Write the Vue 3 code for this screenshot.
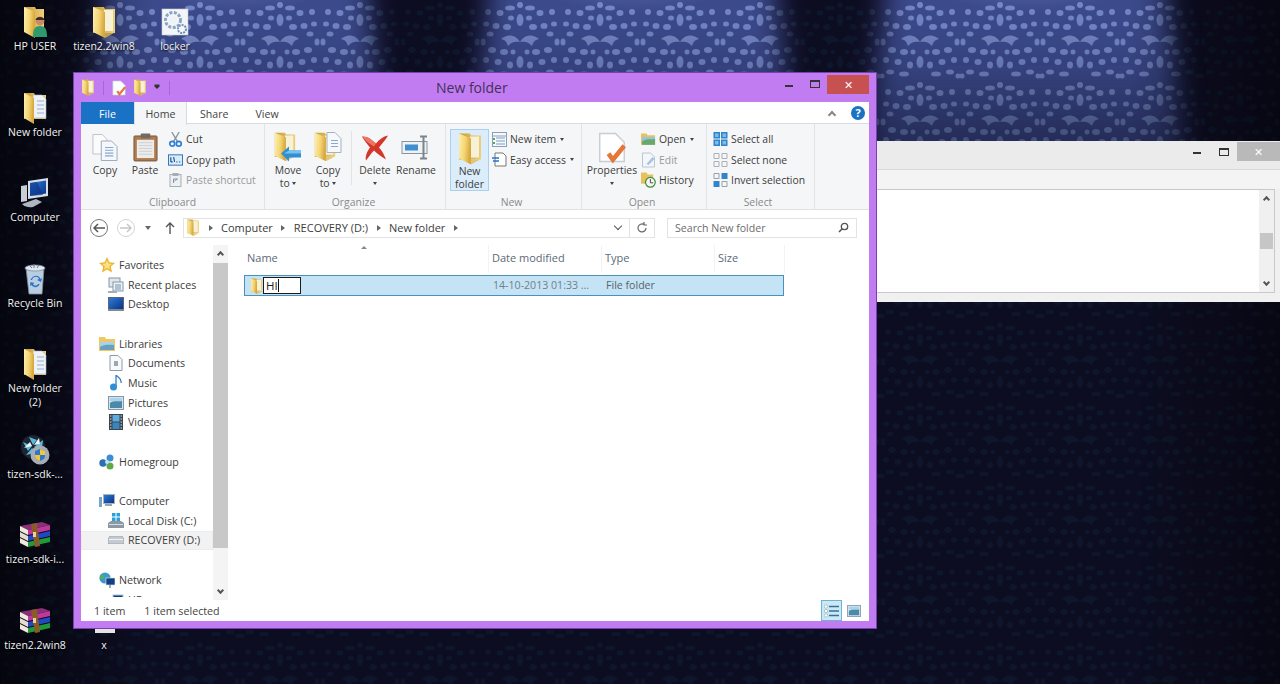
<template>
  <div class="desktop">
    <!-- wallpaper -->
    <svg class="wallpaper" width="1280" height="684" viewBox="0 0 1280 684">
      <defs>
        <g id="damask-motif">
          <ellipse v-for="(b, i) in damaskBlobs" :key="i" :cx="b[0]" :cy="b[1]" :rx="b[2]" :ry="b[3]" />
          <ellipse v-for="(b, i) in damaskBlobs" :key="'m' + i" :cx="80 - b[0]" :cy="b[1]" :rx="b[2]" :ry="b[3]" />
          <path d="M40 42c-5-8-13-8-19-3 5 1 6 4 7 7 3-4 7-5 12-4z" />
          <path d="M40 42c5-8 13-8 19-3-5 1-6 4-7 7-3-4-7-5-12-4z" />
          <ellipse cx="40" cy="20" rx="3.500" ry="6" />
          <ellipse cx="40" cy="62" rx="3.500" ry="6" />
          <circle cx="40" cy="5" r="3" />
        </g>
        <g id="damask-tile">
          <use href="#damask-motif" />
          <use href="#damask-motif" x="80" y="80" />
          <use href="#damask-motif" x="80" />
          <use href="#damask-motif" y="80" />
        </g>
        <pattern id="damask-lit" width="160" height="160" patternUnits="userSpaceOnUse">
          <rect width="160" height="160" fill="#3c4c8e" />
          <use href="#damask-tile" fill="#7487c6" />
        </pattern>
        <pattern id="damask-dim" width="160" height="160" patternUnits="userSpaceOnUse">
          <rect width="160" height="160" fill="#0a0e23" />
          <use href="#damask-tile" fill="#0d1229" />
        </pattern>
        <linearGradient id="spot-fade" gradientUnits="userSpaceOnUse" x1="0" y1="0" x2="0" y2="310">
          <stop offset="0" stop-color="#fff" />
          <stop offset="0.2" stop-color="#e0e0e0" />
          <stop offset="0.42" stop-color="#8c8c8c" />
          <stop offset="0.65" stop-color="#404040" />
          <stop offset="1" stop-color="#000" />
        </linearGradient>
        <filter id="spot-blur" x="-30%" y="-30%" width="160%" height="160%">
          <feGaussianBlur stdDeviation="13" />
        </filter>
        <filter id="soft" x="0" y="0" width="100%" height="100%">
          <feGaussianBlur stdDeviation="0.7" />
        </filter>
        <mask id="spots" maskUnits="userSpaceOnUse" x="0" y="0" width="1280" height="684">
          <g fill="url(#spot-fade)" filter="url(#spot-blur)">
            <polygon points="104,-30 366,-30 398,320 68,320" />
            <polygon points="492,-30 774,-30 810,320 455,320" />
            <polygon points="888,-30 1166,-30 1200,320 850,320" />
          </g>
        </mask>
        <radialGradient id="top-glow" cx="0.5" cy="0" r="0.6">
          <stop offset="0" stop-color="#a9bbff" stop-opacity="0.5" />
          <stop offset="1" stop-color="#a9bbff" stop-opacity="0" />
        </radialGradient>
        <linearGradient id="edge-dark" x1="0" x2="1" y1="0" y2="0">
          <stop offset="0" stop-color="#000" stop-opacity="0.6" />
          <stop offset="0.12" stop-color="#000" stop-opacity="0" />
          <stop offset="0.88" stop-color="#000" stop-opacity="0" />
          <stop offset="1" stop-color="#000" stop-opacity="0.45" />
        </linearGradient>
      </defs>
      <rect width="1280" height="684" fill="url(#damask-dim)" filter="url(#soft)" />
      <g mask="url(#spots)">
        <rect width="1280" height="684" fill="url(#damask-lit)" filter="url(#soft)" />
      </g>
      <ellipse cx="235" cy="0" rx="120" ry="60" fill="url(#top-glow)" />
      <ellipse cx="632" cy="0" rx="120" ry="60" fill="url(#top-glow)" />
      <ellipse cx="1028" cy="0" rx="120" ry="60" fill="url(#top-glow)" />
      <rect width="1280" height="684" fill="url(#edge-dark)" />
    </svg>

    <!-- shared icons -->
    <svg class="defs" width="0" height="0">
      <defs>
        <linearGradient id="fold-front" x1="0" x2="1" y1="0" y2="0.2">
          <stop offset="0" stop-color="#fdf0ae" />
          <stop offset="0.55" stop-color="#f4d574" />
          <stop offset="1" stop-color="#d7a83e" />
        </linearGradient>
        <linearGradient id="fold-back" x1="0" x2="1" y1="0" y2="0">
          <stop offset="0" stop-color="#c99a34" />
          <stop offset="1" stop-color="#ecd07a" />
        </linearGradient>
        <linearGradient id="screen" x1="0" x2="1" y1="0" y2="1">
          <stop offset="0" stop-color="#2f7fd8" />
          <stop offset="1" stop-color="#0a2f86" />
        </linearGradient>
      </defs>

      <symbol id="folder" viewBox="0 0 26 32">
        <path d="M2 1h11l1 2h10v24H2z" fill="url(#fold-back)" />
        <path d="M13 4h9v21h-9z" fill="#f7f1d8" />
        <path d="M2 1l12 5v26L2 26z" fill="url(#fold-front)" />
        <path d="M14 6v26l9-5H14" fill="#e2ba55" opacity="0.8" />
      </symbol>
      <symbol id="folder-papers" viewBox="0 0 26 32">
        <path d="M2 1h10l1 2h11v24H2z" fill="url(#fold-back)" />
        <path d="M11 3h9l4 4v19H11z" fill="#eef2f6" stroke="#a8b4c4" stroke-width="0.6" />
        <path d="M15 9h7M15 13h7M15 17h7M15 21h7" stroke="#8fb0d2" stroke-width="1" />
        <path d="M2 1l10 5v26L2 26z" fill="url(#fold-front)" />
      </symbol>
      <symbol id="folder-user" viewBox="0 0 26 32">
        <path d="M2 1h11l1 2h8v22H2z" fill="url(#fold-back)" />
        <path d="M2 1l11 5v26L2 26z" fill="url(#fold-front)" />
        <path d="M11 31c0-8 2-11 7-11s7 3 7 11z" fill="#2e9a6e" />
        <circle cx="18" cy="15" r="4.4" fill="#c9896a" />
        <path d="M13.6 14c0-4 8.800-4 8.800 0z" fill="#3b2a22" />
      </symbol>
      <symbol id="gear-box" viewBox="0 0 28 28">
        <rect x="1" y="1" width="26" height="26" fill="#f3f5f7" stroke="#c4ccd4" stroke-width="0.6" />
        <circle cx="12" cy="12" r="7.500" fill="none" stroke="#8aa6c4" stroke-width="3" stroke-dasharray="3 1.500" />
        <circle cx="12" cy="12" r="4" fill="#eef3f8" />
        <circle cx="21" cy="21" r="4" fill="none" stroke="#6d90b8" stroke-width="2" stroke-dasharray="2 1" />
      </symbol>
      <symbol id="computer" viewBox="0 0 30 30">
        <path d="M8 3l20-3v18L8 21z" fill="#d6dde4" />
        <path d="M10 5l16-2.500v13L10 18z" fill="url(#screen)" />
        <path d="M10 5l7-1 6 13-13 1z" fill="#0b2f83" opacity="0.55" />
        <path d="M1 8l6-1v16l-6 1z" fill="#c8ced5" />
        <path d="M2 26l14-5 6 3-9 5c-5 1-9-1-11-3z" fill="#aeb6bf" />
      </symbol>
      <symbol id="recycle" viewBox="0 0 24 32">
        <path d="M3 5h18l-2 26H6z" fill="#b8cde0" stroke="#7d8b99" stroke-width="0.8" />
        <ellipse cx="12" cy="5" rx="10" ry="3" fill="#dfe8f0" stroke="#7d8b99" stroke-width="0.8" />
        <path d="M6 2l3 3M11 1v4M16 2l-2 3" stroke="#6d7a88" stroke-width="1" />
        <path d="M9 17c1-4 6-4 7-1l-2 1 4 2 1-4-1.500 1c-2-5-8-4-10 1zm6 4c-1 2-4 2-5 0l1.500-1-4-1-.5 4 1.500-1c2 3 7 3 8-1z" fill="#2c72c9" />
      </symbol>
      <symbol id="setup" viewBox="0 0 30 30">
        <circle cx="13" cy="12" r="12" fill="#1c2530" />
        <path d="M12 11L3 7l5 9zm1-1L9 2l8 3zm1 2l9-7-1 8zM12 13l-6 7 9-2z" fill="#5cb8de" />
        <path d="M12 11L4 13l6-6zm2-1l5-7 1 6z" fill="#eef6fa" />
        <circle cx="20" cy="20" r="9.500" fill="#a7adb4" />
        <path d="M20 14l5 2v5c0 3-3 4-5 5-2-1-5-2-5-5v-5z" fill="#2f78c8" />
        <path d="M20 14l5 2v4h-5zM20 20h-5v1c0 3 3 4 5 5z" fill="#f1c63b" />
      </symbol>
      <symbol id="rar" viewBox="0 0 30 26">
        <path d="M0 4l22-4 8 3-22 5z" fill="#8d2f78" />
        <path d="M0 4l8 4v5L0 9z" fill="#efe9df" />
        <path d="M8 8l22-5v5L8 13z" fill="#c0389c" />
        <path d="M0 10l8 4v5l-8-4z" fill="#e4ddd0" />
        <path d="M8 14l22-5v5L8 19z" fill="#2347c2" />
        <path d="M0 16l8 4v5l-8-4z" fill="#efe9df" />
        <path d="M8 20l22-5v5L8 25z" fill="#1f9a39" />
        <path d="M11 2l6-1 3 23-5 1z" fill="#8a5a2b" />
        <rect x="13" y="10" width="3" height="5" fill="#e7d39a" />
      </symbol>

      <symbol id="doc-check" viewBox="0 0 16 18">
        <path d="M1 1h9l5 5v11H1z" fill="#fff" stroke="#c7ccd2" stroke-width="0.8" />
        <path d="M6 12.500l2.500 3.500L15 8" fill="none" stroke="#e5763a" stroke-width="2.600" />
      </symbol>
      <symbol id="copy" viewBox="0 0 28 30">
        <path d="M1 1h10l5 5v16H1z" fill="#fbfbfb" stroke="#b9c0c8" />
        <path d="M10 8h11l6 6v15H10z" fill="#f4f7fb" stroke="#9aa6b4" />
        <path d="M14 15h9M14 18h9M14 21h9M14 24h9" stroke="#88a8cc" stroke-width="1.200" />
      </symbol>
      <symbol id="paste" viewBox="0 0 26 30">
        <rect x="1" y="3" width="24" height="26" rx="1" fill="#b07c4d" stroke="#75563a" />
        <rect x="4" y="7" width="18" height="19" fill="#ececec" />
        <path d="M6 10h14M6 13h14M6 16h14M6 19h14M6 22h14" stroke="#cfcfcf" />
        <rect x="8" y="0.500" width="10" height="5" rx="1" fill="#6f6a66" />
      </symbol>
      <symbol id="cut" viewBox="0 0 14 16">
        <path d="M3 0l6 10M11 0L5 10" stroke="#8a929c" stroke-width="1.400" />
        <circle cx="3.500" cy="12.500" r="2.600" fill="none" stroke="#2d81d4" stroke-width="1.800" />
        <circle cx="10.500" cy="12.500" r="2.600" fill="none" stroke="#2d81d4" stroke-width="1.800" />
      </symbol>
      <symbol id="copy-path" viewBox="0 0 16 12">
        <rect x="0.500" y="0.500" width="15" height="11" fill="#d8ebf9" stroke="#2a6fb8" />
        <path d="M3 3v5M6 3l1 5M3 8h2M9 8h1M12 8h1" stroke="#1d4f8f" stroke-width="1.200" />
      </symbol>
      <symbol id="paste-short" viewBox="0 0 12 14">
        <rect x="0.500" y="1.500" width="11" height="12" fill="#eef0f2" stroke="#a6adb5" />
        <rect x="3" y="0" width="6" height="3" fill="#a6adb5" />
        <path d="M4 10V6h4M5 8l3-2" fill="none" stroke="#7f93ab" />
      </symbol>
      <symbol id="move-to" viewBox="0 0 30 32">
        <use href="#folder" width="24" height="30" />
        <path d="M8 22l8-7v4h12v7H16v4z" fill="#2f8fd3" />
        <path d="M16 19h12v3H11z" fill="#75c2ee" />
      </symbol>
      <symbol id="copy-to" viewBox="0 0 30 32">
        <use href="#folder" width="24" height="30" />
        <path d="M14 1h8l6 6v14H14z" fill="#f6f8fb" stroke="#a6b2c0" />
        <path d="M18 9h7M18 12h7M18 15h7" stroke="#88a8cc" />
      </symbol>
      <symbol id="del" viewBox="0 0 28 28">
        <path d="M1 3c4 0 7 1 9 3l5 4c3-4 7-7 12-8-2 4-6 8-9 12 3 3 5 7 7 12-5-3-9-6-12-9-3 3-5 6-8 10-1-4 1-9 4-13C6 10 3 7 1 3z" fill="#d2372a" />
        <path d="M1 3c4 0 7 1 9 3l5 4-2 3C8 10 4 7 1 3z" fill="#ee7464" />
      </symbol>
      <symbol id="rename" viewBox="0 0 30 24">
        <rect x="1" y="6" width="25" height="12" fill="#eef2f5" stroke="#8a949e" />
        <rect x="4" y="9" width="13" height="6" fill="#3f8ed0" />
        <path d="M19 1h7M19 23h7M22.500 1v22" stroke="#7b848c" stroke-width="2" fill="none" />
      </symbol>
      <symbol id="new-item" viewBox="0 0 15 15">
        <rect x="0.500" y="0.500" width="14" height="14" fill="#f6f8fb" stroke="#8aa0b8" />
        <path d="M0 4h15" stroke="#8aa0b8" />
        <path d="M4 6h9M4 9h9M4 12h9" stroke="#7aa0c6" />
        <path d="M1 6h2v2H1zM1 10h2v2H1z" fill="#60a060" />
      </symbol>
      <symbol id="easy" viewBox="0 0 15 15">
        <path d="M3 1h8l3 3v10H3z" fill="#fff" stroke="#777" />
        <path d="M0 6h7M1 9h6" stroke="#2277cc" stroke-width="1.400" />
      </symbol>
      <symbol id="open" viewBox="0 0 16 14">
        <path d="M0 1h6l1 2h8v10H0z" fill="#e7c25c" />
        <path d="M1 5h14v8H1z" fill="#8ec6e4" />
        <path d="M1 10c5-4 9-2 14-3v6H1z" fill="#6aa86a" />
      </symbol>
      <symbol id="edit" viewBox="0 0 14 16">
        <path d="M1 1h8l4 4v10H1z" fill="#f3f6fa" stroke="#b6c6d8" />
        <path d="M5 12l6-7 2 2-6 6z" fill="#a8c2de" />
      </symbol>
      <symbol id="history" viewBox="0 0 16 16">
        <path d="M0 0h6l1 2h6v10H0z" fill="#e7c25c" />
        <circle cx="10" cy="10.500" r="5.200" fill="#f4f6f4" stroke="#3c8a3c" stroke-width="1.300" />
        <path d="M10 7v4h3" fill="none" stroke="#444" />
      </symbol>
      <symbol id="sel-all" viewBox="0 0 14 14">
        <path d="M0 0h6.500v6.500H0zM7.500 0H14v6.500H7.500zM0 7.500h6.500V14H0zM7.500 7.500H14V14H7.500z" fill="#2f84cc" />
        <path d="M1.500 1.500H5V5H1.500zM9 1.500h3.500V5H9zM1.500 9H5v3.500H1.500zM9 9h3.500v3.500H9z" fill="#7cbce8" />
      </symbol>
      <symbol id="sel-none" viewBox="0 0 14 14">
        <path d="M.5.5h5v5h-5zM8.500.5h5v5h-5zM.5 8.500h5v5h-5zM8.500 8.500h5v5h-5z" fill="none" stroke="#aab0b6" />
      </symbol>
      <symbol id="sel-invert" viewBox="0 0 14 14">
        <path d="M.5.5h5v5h-5zM8.500 8.500h5v5h-5z" fill="none" stroke="#98a0a8" />
        <path d="M8 0h6v6H8zM0 8h6v6H0z" fill="#2f84cc" />
      </symbol>

      <symbol id="star" viewBox="0 0 16 16">
        <path d="M8 0l2.400 5.300 5.600.6-4.200 3.700L13 15.500 8 12.500 3 15.500l1.200-5.900L0 5.900l5.600-.6z" fill="#f0b429" />
        <path d="M8 3l1.500 3.500 3.500.4-2.800 2.300.8 3.500L8 10.800 5 12.700l.8-3.500L3 6.900l3.500-.4z" fill="#fbe08a" />
      </symbol>
      <symbol id="recent" viewBox="0 0 16 16">
        <rect x="1" y="1" width="11" height="9" fill="#dfe6ee" stroke="#8a96a4" />
        <rect x="5" y="5" width="10" height="9" fill="#eef2f6" stroke="#8a96a4" />
        <path d="M7 8h6M7 10h6M7 12h6" stroke="#6f92b8" />
        <path d="M0 14h9v2H0z" fill="#a4aeb9" />
      </symbol>
      <symbol id="desk" viewBox="0 0 16 14">
        <rect x="0.500" y="0.500" width="15" height="12" fill="url(#screen)" stroke="#5d6672" />
        <rect x="0" y="12" width="16" height="2" fill="#7f8893" />
      </symbol>
      <symbol id="lib" viewBox="0 0 16 14">
        <path d="M0 0h6l1 2h9v12H0z" fill="#eec865" />
        <path d="M1 5h14v8H1z" fill="#a5d4ea" />
        <path d="M1 10c5-3 9-2 14-2v5H1z" fill="#6aa0bc" />
      </symbol>
      <symbol id="docs" viewBox="0 0 14 16">
        <path d="M1 .5h8l4 4v11H1z" fill="#f7f9fb" stroke="#8f9aa6" />
        <rect x="5" y="6" width="4" height="5" fill="#9aa7b5" />
      </symbol>
      <symbol id="music" viewBox="0 0 12 16">
        <path d="M6 0v11.500M6 0c2 3 6 3 5 8" fill="none" stroke="#2f80c8" stroke-width="1.300" />
        <ellipse cx="3.500" cy="12" rx="3.500" ry="3.500" fill="#2f8fd6" />
      </symbol>
      <symbol id="pics" viewBox="0 0 16 14">
        <rect x="0.500" y="0.500" width="15" height="13" fill="#cfe6f2" stroke="#8a96a4" />
        <path d="M2 7c4-3 8-1 12-2v7H2z" fill="#4a8aa8" />
        <path d="M2 2h12v3H2z" fill="#a9d3ea" />
      </symbol>
      <symbol id="vids" viewBox="0 0 14 16">
        <rect width="14" height="16" fill="#39444f" />
        <rect x="3.500" y="1" width="7" height="6.500" fill="#5cace0" />
        <rect x="3.500" y="8.500" width="7" height="6.500" fill="#3a84c0" />
        <path d="M1 2h1.500M1 5h1.500M1 8h1.500M1 11h1.500M1 14h1.500M11.500 2H13M11.500 5H13M11.500 8H13M11.500 11H13M11.500 14H13" stroke="#d5dbe0" />
      </symbol>
      <symbol id="home" viewBox="0 0 16 16">
        <circle cx="11" cy="4" r="3.500" fill="#3b8fd0" />
        <circle cx="4" cy="9" r="3.700" fill="#2e6fb4" />
        <circle cx="11" cy="12" r="3.500" fill="#5cab45" />
        <circle cx="8" cy="8" r="2" fill="#bfe0f2" />
      </symbol>
      <symbol id="comp-small" viewBox="0 0 16 14">
        <rect x="4.500" y="0.500" width="11" height="9" fill="url(#screen)" stroke="#aab4be" />
        <path d="M6 10h7v2H6z" fill="#9aa5b0" />
        <path d="M0 3h3v10H0z" fill="#79a6c4" />
      </symbol>
      <symbol id="disk-c" viewBox="0 0 16 16">
        <path d="M4 0h3.500v3.500H4zM8.500 0H12v3.500H8.500zM4 4.500h3.500V8H4zM8.500 4.500H12V8H8.500z" fill="#2aa0d8" />
        <path d="M0 10l3-2h10l3 2v5H0z" fill="#8e98a3" />
        <path d="M1 11h14v1H1z" fill="#d6dce2" />
      </symbol>
      <symbol id="disk-d" viewBox="0 0 16 8">
        <path d="M0 3l2-3h12l2 3v5H0z" fill="#c4cacf" stroke="#8b939b" stroke-width="0.600" />
        <path d="M1 3h14v1H1z" fill="#eef0f2" />
      </symbol>
      <symbol id="net" viewBox="0 0 16 16">
        <circle cx="6" cy="6" r="5.600" fill="#3a9ad0" />
        <path d="M3 2c2 1 3 2 2 4S2 7 1 6zM7 6c2-1 4 0 4 2s-3 3-4 1z" fill="#5cae52" />
        <rect x="7" y="6" width="9" height="7" fill="#123f86" stroke="#e0e6ec" stroke-width="0.600" />
        <path d="M11 13v3" stroke="#456" />
      </symbol>
      <symbol id="pc-net" viewBox="0 0 16 12">
        <path d="M0 5h2v2H0z" fill="#123f86" />
        <rect x="5" y="1" width="10" height="8" fill="#123f86" stroke="#a8c8e0" />
      </symbol>
    </svg>

    <!-- desktop shortcuts -->
    <div
      v-for="icon in desktopIcons"
      :key="icon.label + icon.top"
      class="shortcut"
      :style="{ left: icon.left + 'px', top: icon.top + 'px' }"
    >
      <svg class="shortcut-icon" :width="icon.w" :height="icon.h">
        <use v-if="icon.id" :href="'#' + icon.id" />
      </svg>
      <span class="shortcut-label">{{ icon.label }}</span>
    </div>
    <div class="stub-icon"></div>

    <!-- window behind -->
    <div class="back-win">
      <div class="back-title">
        <span class="cap-min dark"></span>
        <span class="cap-max dark"></span>
        <span class="back-close">✕</span>
      </div>
      <div class="back-tool"></div>
      <div class="back-body">
        <div class="back-scroll">
          <span class="chev up"></span>
          <span class="back-thumb"></span>
          <span class="chev down"></span>
        </div>
      </div>
    </div>

    <!-- explorer window -->
    <div class="win">
      <div class="title-bar">
        <div class="qat">
          <svg width="14" height="17"><use href="#folder" /></svg>
          <i class="qat-sep"></i>
          <svg class="qat-doc" width="14" height="16"><use href="#doc-check" /></svg>
          <svg width="14" height="17"><use href="#folder" /></svg>
          <span class="qat-drop"></span>
          <i class="qat-sep last"></i>
        </div>
        <span class="title-text">New folder</span>
        <div class="caps">
          <span class="cap-min"></span>
          <span class="cap-max"></span>
          <span class="cap-close">✕</span>
        </div>
      </div>

      <div class="tabs">
        <span class="tab file">File</span>
        <span class="tab home">Home</span>
        <span class="tab share">Share</span>
        <span class="tab view">View</span>
        <span class="collapse"></span>
        <span class="help">?</span>
      </div>

      <div class="ribbon">
        <section class="group clipboard">
          <div class="group-body">
            <div class="big"><svg width="26" height="29"><use href="#copy" /></svg><span>Copy</span></div>
            <div class="big"><svg width="25" height="29"><use href="#paste" /></svg><span>Paste</span></div>
            <div class="small-list">
              <div class="small"><svg width="13" height="15"><use href="#cut" /></svg>Cut</div>
              <div class="small"><svg width="15" height="12"><use href="#copy-path" /></svg>Copy path</div>
              <div class="small off"><svg width="12" height="14"><use href="#paste-short" /></svg>Paste shortcut</div>
            </div>
          </div>
          <div class="group-name">Clipboard</div>
        </section>

        <section class="group organize">
          <div class="group-body">
            <div class="big"><svg width="30" height="32"><use href="#move-to" /></svg><span>Move<br />to <b class="drop"></b></span></div>
            <div class="big"><svg width="30" height="32"><use href="#copy-to" /></svg><span>Copy<br />to <b class="drop"></b></span></div>
            <i class="inner-sep"></i>
            <div class="big"><svg width="28" height="30"><use href="#del" /></svg><span>Delete<br /><b class="drop"></b></span></div>
            <div class="big rename"><svg width="30" height="30"><use href="#rename" /></svg><span>Rename</span></div>
          </div>
          <div class="group-name">Organize</div>
        </section>

        <section class="group new">
          <div class="group-body">
            <div class="big active"><svg width="26" height="32"><use href="#folder" /></svg><span>New<br />folder</span></div>
            <div class="small-list">
              <div class="small"><svg width="15" height="15"><use href="#new-item" /></svg>New item <b class="drop"></b></div>
              <div class="small"><svg width="15" height="15"><use href="#easy" /></svg>Easy access <b class="drop"></b></div>
            </div>
          </div>
          <div class="group-name">New</div>
        </section>

        <section class="group open">
          <div class="group-body">
            <div class="big wide"><svg width="28" height="31"><use href="#doc-check" /></svg><span>Properties<br /><b class="drop"></b></span></div>
            <div class="small-list">
              <div class="small"><svg width="16" height="14"><use href="#open" /></svg>Open <b class="drop"></b></div>
              <div class="small off"><svg width="14" height="16"><use href="#edit" /></svg>Edit</div>
              <div class="small"><svg width="16" height="16"><use href="#history" /></svg>History</div>
            </div>
          </div>
          <div class="group-name">Open</div>
        </section>

        <section class="group select">
          <div class="group-body">
            <div class="small-list">
              <div class="small"><svg width="14" height="14"><use href="#sel-all" /></svg>Select all</div>
              <div class="small"><svg width="14" height="14"><use href="#sel-none" /></svg>Select none</div>
              <div class="small"><svg width="14" height="14"><use href="#sel-invert" /></svg>Invert selection</div>
            </div>
          </div>
          <div class="group-name">Select</div>
        </section>
      </div>

      <div class="address-row">
        <span class="round back">
          <svg width="12" height="10" viewBox="0 0 12 10"><path d="M5 1L1 5l4 4M1 5h11" fill="none" stroke="#555" stroke-width="1.500" /></svg>
        </span>
        <span class="round fwd">
          <svg width="12" height="10" viewBox="0 0 12 10"><path d="M7 1l4 4-4 4M11 5H0" fill="none" stroke="#c6c6c6" stroke-width="1.500" /></svg>
        </span>
        <span class="hist-drop"></span>
        <svg class="up-arrow" width="10" height="12" viewBox="0 0 10 12"><path d="M1 5l4-4 4 4M5 1v11" fill="none" stroke="#555" stroke-width="1.400" /></svg>
        <div class="crumbs">
          <svg class="crumb-folder" width="14" height="17"><use href="#folder" /></svg>
          <span class="crumb-arrow"></span>
          <span>Computer</span>
          <span class="crumb-arrow"></span>
          <span>RECOVERY (D:)</span>
          <span class="crumb-arrow"></span>
          <span>New folder</span>
          <span class="crumb-arrow"></span>
          <span class="crumb-chev"></span>
          <span class="crumb-refresh">
            <svg width="12" height="12" viewBox="0 0 12 12"><path d="M10 6a4 4 0 1 1-2-3.500M8 0v3h3" fill="none" stroke="#666" stroke-width="1.200" /></svg>
          </span>
        </div>
        <div class="search">
          <span>Search New folder</span>
          <svg width="11" height="11" viewBox="0 0 11 11"><circle cx="6.500" cy="4.500" r="3.200" fill="none" stroke="#555" stroke-width="1.300" /><path d="M4 7l-3 3" stroke="#555" stroke-width="1.600" /></svg>
        </div>
      </div>

      <div class="main">
        <nav class="nav">
          <template v-for="(row, i) in navRows" :key="i">
            <div v-if="!row.label" class="nav-gap"></div>
            <div v-else class="nav-row" :class="{ sub: row.sub, current: row.current }">
              <svg :width="row.w || 16" :height="row.h || 16"><use :href="'#' + row.id" /></svg>
              <span>{{ row.label }}</span>
            </div>
          </template>
        </nav>
        <div class="nav-scroll">
          <span class="chev up"></span>
          <span class="nav-thumb"></span>
          <span class="chev down"></span>
        </div>

        <div class="files">
          <div class="file-head">
            <span class="sort-mark"></span>
            <span class="col name">Name</span>
            <span class="col date">Date modified</span>
            <span class="col type">Type</span>
            <span class="col size">Size</span>
          </div>
          <div class="file-row">
            <svg class="file-folder" width="13" height="16"><use href="#folder" /></svg>
            <span class="rename-box">HI<i class="caret"></i></span>
            <span class="cell-date">14-10-2013 01:33 ...</span>
            <span class="cell-type">File folder</span>
          </div>
        </div>
      </div>

      <div class="status">
        <span class="count">1 item</span>
        <span>1 item selected</span>
        <div class="views">
          <span class="view-btn on">
            <svg width="16" height="14" viewBox="0 0 16 14"><path d="M5 2.500h10M5 7h10M5 11.500h10" stroke="#3b6f98" stroke-width="1.500" /><circle cx="2" cy="2.500" r="1.700" fill="#fff" stroke="#8aa" stroke-width="0.600" /><circle cx="2" cy="7" r="1.700" fill="#fff" stroke="#8aa" stroke-width="0.600" /><circle cx="2" cy="11.500" r="1.700" fill="#fff" stroke="#8aa" stroke-width="0.600" /></svg>
          </span>
          <span class="view-btn">
            <svg width="14" height="12"><use href="#pics" /></svg>
          </span>
        </div>
      </div>
    </div>
  </div>
</template>

<script setup>
// left half of one wallpaper motif, mirrored in the template: cx, cy, rx, ry
const damaskBlobs = [
  [30, 8, 5, 2.5],
  [20, 13, 3.5, 3],
  [31, 18, 3, 2.5],
  [27, 27, 4, 3],
  [16, 26, 3.5, 3],
  [8, 12, 3, 3],
  [6, 24, 3, 2.5],
  [10, 34, 3.5, 2.5],
  [3, 42, 2.5, 3.5],
  [12, 50, 4, 3],
  [24, 52, 4, 3],
  [33, 52, 2.5, 2.5],
  [6, 60, 3, 3],
  [18, 62, 3.5, 3],
  [30, 65, 3, 3.5],
  [10, 72, 4, 2.5],
  [24, 74, 5, 2.5],
  [2, 76, 2.5, 2.5],
]

// desktop shortcuts sit on a free canvas, so they keep their own coordinates
const desktopIcons = [
  { id: 'folder-user', label: 'HP USER', left: -3, top: 5, w: 26, h: 32 },
  { id: 'folder', label: 'tizen2.2win8', left: 66, top: 5, w: 26, h: 32 },
  { id: 'gear-box', label: 'locker', left: 137, top: 5, w: 28, h: 28 },
  { id: 'folder-papers', label: 'New folder', left: -3, top: 91, w: 26, h: 32 },
  { id: 'computer', label: 'Computer', left: -3, top: 176, w: 30, h: 32 },
  { id: 'recycle', label: 'Recycle Bin', left: -3, top: 262, w: 24, h: 33 },
  { id: 'folder-papers', label: 'New folder (2)', left: -3, top: 347, w: 26, h: 32 },
  { id: 'setup', label: 'tizen-sdk-...', left: -3, top: 433, w: 30, h: 32 },
  { id: 'rar', label: 'tizen-sdk-i...', left: -3, top: 518, w: 30, h: 32 },
  { id: 'rar', label: 'tizen2.2win8', left: -3, top: 604, w: 30, h: 32 },
  { id: '', label: 'x', left: 66, top: 604, w: 30, h: 32 },
]

const navRows = [
  { id: 'star', label: 'Favorites' },
  { id: 'recent', label: 'Recent places', sub: true },
  { id: 'desk', label: 'Desktop', sub: true, h: 14 },
  {},
  { id: 'lib', label: 'Libraries', h: 14 },
  { id: 'docs', label: 'Documents', sub: true },
  { id: 'music', label: 'Music', sub: true },
  { id: 'pics', label: 'Pictures', sub: true, h: 14 },
  { id: 'vids', label: 'Videos', sub: true },
  {},
  { id: 'home', label: 'Homegroup' },
  {},
  { id: 'comp-small', label: 'Computer', h: 14 },
  { id: 'disk-c', label: 'Local Disk (C:)', sub: true },
  { id: 'disk-d', label: 'RECOVERY (D:)', sub: true, h: 8, current: true },
  {},
  { id: 'net', label: 'Network' },
  { id: 'pc-net', label: 'HP', sub: true, h: 12 },
]
</script>

<style>
html,
body {
  margin: 0;
  background: #090d22;
}
</style>

<style scoped>
.desktop {
  position: relative;
  width: 1280px;
  height: 684px;
  overflow: hidden;
  font-family: 'Open Sans', 'Noto Sans', sans-serif;
  font-size: 11px;
  color: #3c3c3c;
}

.wallpaper,
.defs {
  position: absolute;
  left: 0;
  top: 0;
}

.shortcut {
  position: absolute;
  width: 76px;
  display: flex;
  flex-direction: column;
  align-items: center;
}

.shortcut-icon {
  flex: none;
  height: 34px;
}

.shortcut-label {
  width: 64px;
  text-align: center;
  font-size: 10.5px;
  line-height: 14px;
  color: #f2f2f2;
  text-shadow: 0 1px 2px #000;
}

.stub-icon {
  position: absolute;
  left: 95px;
  top: 628px;
  width: 20px;
  height: 5px;
  background: #e4e4e4;
}

/* window behind */
.back-win {
  position: absolute;
  left: 860px;
  top: 141px;
  width: 420px;
  height: 161px;
  display: flex;
  flex-direction: column;
  background: #f0f0f0;
}

.back-title {
  height: 29px;
  flex: none;
  display: flex;
  justify-content: flex-end;
  align-items: flex-start;
  background: #ebebeb;
  border-bottom: 1px solid #d8d8d8;
  box-sizing: border-box;
}

.back-title .cap-min {
  margin: 11px 18px 0 0;
}

.back-title .cap-max {
  margin: 7px 8px 0 0;
}

.back-close {
  width: 43px;
  height: 19px;
  margin-top: 1px;
  line-height: 19px;
  text-align: center;
  font-size: 11px;
  color: #fff;
  background: #b9b9b9;
}

.back-tool {
  height: 19px;
  flex: none;
  background: #f4f4f4;
}

.back-body {
  height: 104px;
  flex: none;
  margin-right: 5px;
  display: flex;
  justify-content: flex-end;
  background: #fff;
  border: 1px solid #c8c8c8;
  box-sizing: border-box;
}

.back-scroll {
  position: relative;
  width: 15px;
  background: #f0f0f0;
}

.back-thumb {
  position: absolute;
  left: 1px;
  top: 43px;
  width: 13px;
  height: 16px;
  background: #c6c6c6;
}

/* small scroll chevrons */
.chev {
  position: absolute;
  left: 50%;
  width: 5px;
  height: 5px;
  margin-left: -3px;
  border-left: 2px solid #555;
  border-top: 2px solid #555;
  box-sizing: border-box;
}

.chev.up {
  top: 7px;
  transform: rotate(45deg);
}

.chev.down {
  bottom: 7px;
  transform: rotate(225deg);
}

/* explorer */
.win {
  position: absolute;
  left: 74px;
  top: 73px;
  width: 802px;
  height: 555px;
  padding: 0 7px 7px;
  box-sizing: border-box;
  display: flex;
  flex-direction: column;
  background: #c27cf2;
  box-shadow: 0 0 0 1px #7a3fb0;
}

.title-bar {
  position: relative;
  height: 29px;
  flex: none;
  display: flex;
  align-items: flex-start;
}

.qat {
  display: flex;
  align-items: center;
  height: 29px;
}

.qat-sep {
  width: 1px;
  height: 14px;
  margin: 0 8px;
  background: #a867d6;
}

.qat-sep.last {
  margin-left: 9px;
}

.qat-doc {
  margin-right: 7px;
}

.qat-drop {
  width: 0;
  height: 0;
  margin-left: 7px;
  border: 3px solid transparent;
  border-top: 3px solid #333;
  border-bottom: 0;
  box-shadow: 0 -2px 0 -0.5px #333;
}

.title-text {
  position: absolute;
  left: 355px;
  top: 5px;
  font-size: 14px;
  line-height: 20px;
  color: #43305a;
}

.caps {
  margin-left: auto;
  display: flex;
  align-items: flex-start;
}

.cap-min {
  width: 8px;
  height: 2px;
  margin: 12px 17px 0 0;
  background: #333;
  display: block;
}

.cap-max {
  width: 10px;
  height: 8px;
  margin: 7px 7px 0 0;
  border: 1px solid #333;
  border-top-width: 2px;
  box-sizing: border-box;
  display: block;
}

.cap-close {
  width: 42px;
  height: 19px;
  margin-top: 2px;
  line-height: 19px;
  text-align: center;
  font-size: 11px;
  color: #fff;
  background: #c75050;
}

.tabs {
  position: relative;
  height: 22px;
  flex: none;
  display: flex;
  align-items: center;
  background: #fff;
  border-bottom: 1px solid #dadbdc;
  box-sizing: border-box;
}

.tab {
  padding-top: 3px;
  line-height: 18px;
  font-size: 10.6px;
  color: #444;
}

.tab.file {
  width: 53px;
  height: 22px;
  padding-top: 0;
  text-align: center;
  line-height: 24px;
  color: #fff;
  background: #1a72c4;
}

.tab.home {
  width: 53px;
  height: 23px;
  padding-top: 0;
  text-align: center;
  line-height: 24px;
  background: #f5f6f7;
  border: solid #dadbdc;
  border-width: 0 1px;
  box-sizing: border-box;
  position: relative;
  top: 1px;
}

.tab.share {
  margin-left: 13px;
}

.tab.view {
  margin-left: 27px;
}

.collapse {
  width: 6px;
  height: 6px;
  margin-left: auto;
  margin-right: 16px;
  margin-top: 4px;
  border-left: 2px solid #888;
  border-top: 2px solid #888;
  box-sizing: border-box;
  transform: rotate(45deg);
}

.help {
  width: 14px;
  height: 14px;
  margin-right: 4px;
  border-radius: 50%;
  background: #1a72c4;
  color: #fff;
  font-size: 11px;
  font-weight: 700;
  line-height: 14px;
  text-align: center;
}

.ribbon {
  height: 86px;
  flex: none;
  display: flex;
  font-size: 10.4px;
  background: #f5f6f7;
  border-bottom: 1px solid #dfe0e1;
  box-sizing: border-box;
}

.group {
  display: flex;
  flex-direction: column;
  padding-top: 5px;
  border-right: 1px solid #e2e3e4;
  box-sizing: border-box;
}

.group.clipboard {
  width: 184px;
  padding-left: 4px;
}

.group.organize {
  width: 181px;
  padding-left: 3px;
}

.group.new {
  width: 136px;
  padding-left: 4px;
}

.group.open {
  width: 125px;
  padding-left: 4px;
}

.group.select {
  width: 108px;
  padding-left: 3px;
}

.group-body {
  flex: 1;
  display: flex;
  align-items: flex-start;
}

.group-name {
  height: 14px;
  margin-left: -4px;
  line-height: 14px;
  text-align: center;
  color: #8a8a8a;
}

.organize .group-name {
  margin-right: 2px;
}

.new .group-name,
.open .group-name,
.select .group-name {
  margin-right: 4px;
}

.big {
  width: 40px;
  height: 62px;
  flex: none;
  display: flex;
  flex-direction: column;
  align-items: center;
  box-sizing: border-box;
  padding-top: 2px;
}

.big svg {
  height: 33px;
  flex: none;
}

.big span {
  line-height: 12.5px;
  text-align: center;
  white-space: nowrap;
}

.big.rename {
  margin-left: 1px;
}

.big.active {
  width: 39px;
  background: #dbecfa;
  border: 1px solid #a9d1ee;
}

.big.wide {
  width: 52px;
}

.drop {
  display: inline-block;
  width: 0;
  height: 0;
  vertical-align: middle;
  border: 2.5px solid transparent;
  border-top: 3px solid #444;
  border-bottom: 0;
}

.inner-sep {
  width: 1px;
  height: 54px;
  margin: 2px 3px 0;
  background: #e2e3e4;
}

.small-list {
  margin-left: 3px;
  display: flex;
  flex-direction: column;
}

.small {
  height: 20.5px;
  display: flex;
  align-items: center;
  gap: 3px;
  white-space: nowrap;
}

.small svg {
  width: 15px;
  flex: none;
}

.small .drop {
  margin-left: 1px;
}

.small.off {
  color: #9a9a9a;
}

.address-row {
  height: 35px;
  flex: none;
  display: flex;
  align-items: center;
  padding-left: 9px;
  background: #fff;
}

.round {
  width: 18px;
  height: 18px;
  flex: none;
  display: flex;
  align-items: center;
  justify-content: center;
  border-radius: 50%;
  border: 1.5px solid #777;
  box-sizing: border-box;
}

.round.fwd {
  margin-left: 9px;
  border-color: #d4d4d4;
}

.hist-drop {
  width: 0;
  height: 0;
  margin-left: 10px;
  border: 3px solid transparent;
  border-top: 4px solid #666;
  border-bottom: 0;
}

.up-arrow {
  margin-left: 14px;
}

.crumbs {
  height: 20px;
  width: 472px;
  margin-left: 8px;
  display: flex;
  align-items: center;
  background: #fff;
  border: 1px solid #e2e3e4;
  box-sizing: border-box;
  padding-left: 2px;
  color: #3c3c3c;
}

.crumb-arrow {
  width: 0;
  height: 0;
  margin: 0 8.5px;
  border: 3px solid transparent;
  border-left: 4px solid #666;
  border-right: 0;
}

.crumb-chev {
  width: 6px;
  height: 6px;
  margin-left: auto;
  margin-right: 8px;
  margin-top: -3px;
  border-right: 1.5px solid #555;
  border-bottom: 1.5px solid #555;
  box-sizing: border-box;
  transform: rotate(45deg);
}

.crumb-refresh {
  width: 24px;
  height: 18px;
  display: flex;
  align-items: center;
  justify-content: center;
  border-left: 1px solid #e2e3e4;
}

.search {
  width: 190px;
  height: 20px;
  margin-left: 12px;
  padding: 0 7px;
  display: flex;
  align-items: center;
  justify-content: space-between;
  border: 1px solid #e2e3e4;
  box-sizing: border-box;
  font-size: 10.6px;
  color: #6d6d6d;
}

.main {
  height: 355px;
  flex: none;
  display: flex;
  background: #fff;
}

.nav {
  width: 132px;
  height: 352px;
  flex: none;
  padding-top: 10px;
  box-sizing: border-box;
  overflow: hidden;
  font-size: 10.7px;
}

.nav-gap {
  height: 19.7px;
}

.nav-row {
  height: 19.7px;
  display: flex;
  align-items: center;
  gap: 4px;
  padding-left: 18px;
  white-space: nowrap;
}

.nav-row svg {
  width: 16px;
  flex: none;
}

.nav-row.sub {
  padding-left: 27px;
}

.nav-row.current {
  background: #f2f2f2;
  box-shadow: inset 0 0 0 1px #ececec;
}

.nav-scroll {
  position: relative;
  width: 15px;
  flex: none;
  background: #f4f4f4;
}

.nav-scroll .chev.up {
  top: 7px;
}

.nav-thumb {
  position: absolute;
  left: 0;
  top: 18px;
  width: 15px;
  height: 285px;
  background: #c8c8c8;
}

.files {
  flex: 1;
  padding-left: 16px;
}

.file-head {
  position: relative;
  height: 30px;
  display: flex;
  align-items: flex-start;
  color: #5c6a78;
}

.sort-mark {
  position: absolute;
  left: 117px;
  top: 1px;
  width: 0;
  height: 0;
  border: 3px solid transparent;
  border-bottom: 3px solid #888;
  border-top: 0;
}

.col {
  flex: none;
  height: 28px;
  line-height: 26px;
  padding-left: 3px;
  box-sizing: border-box;
  border-right: 1px solid #f1f3f5;
}

.col.name {
  width: 245px;
}

.col.date {
  width: 113px;
}

.col.type {
  width: 113px;
}

.col.size {
  width: 70px;
}

.file-row {
  width: 540px;
  height: 21px;
  display: flex;
  align-items: center;
  background: #c4e3f5;
  border: 1px solid #4a92bb;
  box-sizing: border-box;
}

.file-folder {
  margin-left: 5px;
  flex: none;
}

.rename-box {
  width: 38px;
  height: 17px;
  padding-left: 2px;
  flex: none;
  line-height: 15px;
  font-size: 11.5px;
  color: #222;
  background: #fff;
  border: 1px solid #1b1b1b;
  box-sizing: border-box;
  display: flex;
  align-items: center;
}

.caret {
  width: 1px;
  height: 13px;
  background: #111;
}

.cell-date {
  width: 113px;
  margin-left: 192px;
  margin-top: -1px;
  flex: none;
  font-size: 10.6px;
  color: #71808c;
  white-space: nowrap;
}

.cell-type {
  margin-top: -1px;
  font-size: 10.6px;
  color: #57636e;
}

.status {
  height: 21px;
  flex: none;
  display: flex;
  align-items: center;
  padding-left: 13px;
  font-size: 10.7px;
  background: #fff;
  color: #444;
}

.count {
  margin-right: 19px;
}

.views {
  margin-left: auto;
  margin-right: 6px;
  display: flex;
  gap: 3px;
  align-items: center;
}

.view-btn {
  width: 18px;
  height: 21px;
  display: flex;
  align-items: center;
  justify-content: center;
  box-sizing: border-box;
}

.view-btn.on {
  width: 21px;
  background: #cbe8f6;
  border: 1px solid #6eb2d4;
}
</style>
